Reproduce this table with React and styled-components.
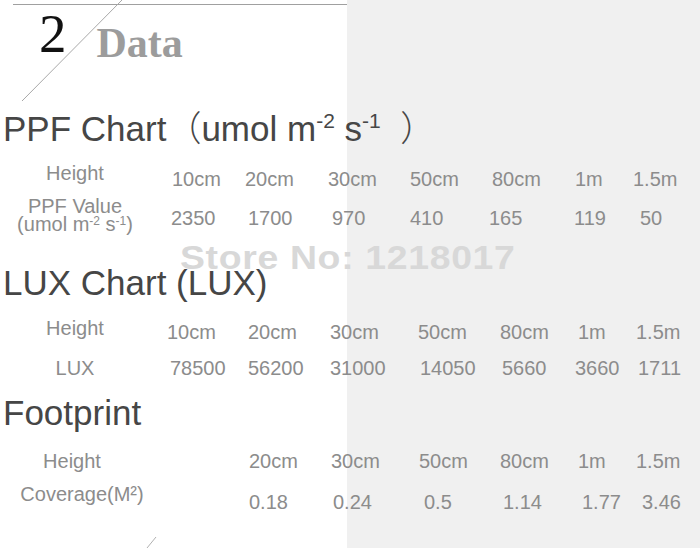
import React from "react";
import styled, { createGlobalStyle } from "styled-components";

const toTemplate = (xs) =>
  [xs[0], ...xs.slice(1).map((x, i) => x - xs[i])].map((w) => `${w}px`).join(" ") + " auto";

const DataRow = ({ row }) => (
  <StRow $template={toTemplate(row.xs)} $gap={row.gap}>
    <StLabel $lift={row.lift} $w={row.labelWidth || 150} $tight={row.tight}>
      {row.label}
    </StLabel>
    {row.cells.map((c, i) => (
      <StCell key={i}>{c}</StCell>
    ))}
  </StRow>
);

const App = () => {
  return (
    <StPage>
      <GlobalStyle />

      <StHeader>
        <StRule />
        <StTitleRow>
          <StNumber>2</StNumber>
          <StData>Data</StData>
        </StTitleRow>
      </StHeader>

      <StHeading>
        PPF Chart<StWide>（</StWide>umol m<StHeadSup>-2</StHeadSup> s<StHeadSup>-1</StHeadSup>
        {"\u00a0\u00a0"}
        <StWide>）</StWide>
      </StHeading>
      {ppfRows.map((r, i) => (
        <DataRow key={i} row={r} />
      ))}

      <StHeading $gap={35}>LUX Chart (LUX)</StHeading>
      {luxRows.map((r, i) => (
        <DataRow key={i} row={r} />
      ))}

      <StHeading $gap={15}>Footprint</StHeading>
      {footRows.map((r, i) => (
        <DataRow key={i} row={r} />
      ))}

      <StWatermark>Store No: 1218017</StWatermark>

      <StLines width="700" height="548" viewBox="0 0 700 548">
        <line x1="122" y1="0" x2="22" y2="101" stroke="#a8a8a8" strokeWidth="1" />
        <line x1="147" y1="548" x2="156" y2="537" stroke="#b0b0b0" strokeWidth="1" />
      </StLines>
    </StPage>
  );
};

export default App;

const GlobalStyle = createGlobalStyle`
  body {
    margin: 0;
    background: #fff;
  }
`;

const Sup = styled.sup`
  font-size: 12px;
  line-height: 0;
  vertical-align: 6px;
`;

const StPage = styled.div`
  position: relative;
  width: 700px;
  height: 548px;
  overflow: hidden;

  background: linear-gradient(to right, #fff 347px, #f0f0f0 347px);
  font-family: "Liberation Sans", Arial, sans-serif;
`;

const StHeader = styled.header`
  display: flex;
  flex-direction: column;

  height: 106px;
  padding-left: 13px;
  box-sizing: border-box;
`;

const StRule = styled.div`
  width: 334px;
  height: 1px;
  margin-top: 4px;

  background-color: #a0a0a0;
`;

const StTitleRow = styled.div`
  display: flex;
  align-items: flex-start;

  margin-top: 1px;
`;

const StNumber = styled.span`
  margin-left: 26px;

  font-family: "Liberation Serif", "Times New Roman", serif;
  font-size: 55px;
  line-height: 55px;
  color: #111;
`;

const StData = styled.span`
  margin-left: 30px;
  margin-top: 16px;

  font-family: "Liberation Serif", "Times New Roman", serif;
  font-weight: 700;
  font-size: 42px;
  line-height: 42px;
  color: #9c9c9c;
`;

const StHeading = styled.h2`
  margin: ${({ $gap }) => $gap || 0}px 0 0;
  padding-left: 3px;

  font-size: 35px;
  font-weight: 400;
  line-height: 40px;
  color: #464646;
  white-space: nowrap;
`;

const StWide = styled.span`
  font-family: "Noto Sans CJK SC", sans-serif;
  font-weight: 300;
`;

const StHeadSup = styled.sup`
  font-size: 21px;
  line-height: 0;
  vertical-align: 13px;
`;

const StRow = styled.div`
  display: grid;
  grid-template-columns: ${({ $template }) => $template};
  align-items: end;

  margin-top: ${({ $gap }) => $gap}px;
`;

const StLabel = styled.div`
  width: ${({ $w }) => $w}px;
  margin-bottom: ${({ $lift }) => $lift}px;

  font-size: 20px;
  line-height: ${({ $tight }) => ($tight ? "18px" : "20px")};
  color: #8c8c8c;
  text-align: center;
  white-space: nowrap;
`;

const StCell = styled.div`
  font-size: 20px;
  line-height: 20px;
  color: #8c8c8c;
  white-space: nowrap;
`;

const StWatermark = styled.div`
  position: absolute;
  top: 240px;
  left: 180px;

  font-size: 34px;
  font-weight: 700;
  line-height: 34px;
  letter-spacing: 0.6px;
  color: #d8d8d8;
  white-space: nowrap;

  transform: scaleX(1.1);
  transform-origin: left top;
`;

const StLines = styled.svg`
  position: absolute;
  top: 0;
  left: 0;

  pointer-events: none;
`;

const ppfRows = [
  {
    label: "Height",
    lift: 6,
    gap: 14,
    xs: [172, 245, 328, 410, 492, 575, 633],
    cells: ["10cm", "20cm", "30cm", "50cm", "80cm", "1m", "1.5m"],
  },
  {
    label: (
      <>
        PPF Value
        <br />
        (umol m<Sup>-2</Sup> s<Sup>-1</Sup>)
      </>
    ),
    lift: -5,
    gap: 8,
    tight: true,
    xs: [171, 248, 332, 410, 489, 574, 640],
    cells: ["2350", "1700", "970", "410", "165", "119", "50"],
  },
];

const luxRows = [
  {
    label: "Height",
    lift: 4,
    gap: 15,
    xs: [167, 248, 330, 418, 500, 578, 636],
    cells: ["10cm", "20cm", "30cm", "50cm", "80cm", "1m", "1.5m"],
  },
  {
    label: "LUX",
    lift: 0,
    gap: 16,
    xs: [170, 248, 330, 420, 502, 575, 638],
    cells: ["78500", "56200", "31000", "14050", "5660", "3660", "1711"],
  },
];

const footRows = [
  {
    label: "Height",
    lift: 0,
    gap: 18,
    labelWidth: 144,
    xs: [249, 331, 419, 500, 578, 636],
    cells: ["20cm", "30cm", "50cm", "80cm", "1m", "1.5m"],
  },
  {
    label: "Coverage(M²)",
    lift: 8,
    gap: 13,
    labelWidth: 164,
    xs: [249, 333, 424, 503, 582, 642],
    cells: ["0.18", "0.24", "0.5", "1.14", "1.77", "3.46"],
  },
];
